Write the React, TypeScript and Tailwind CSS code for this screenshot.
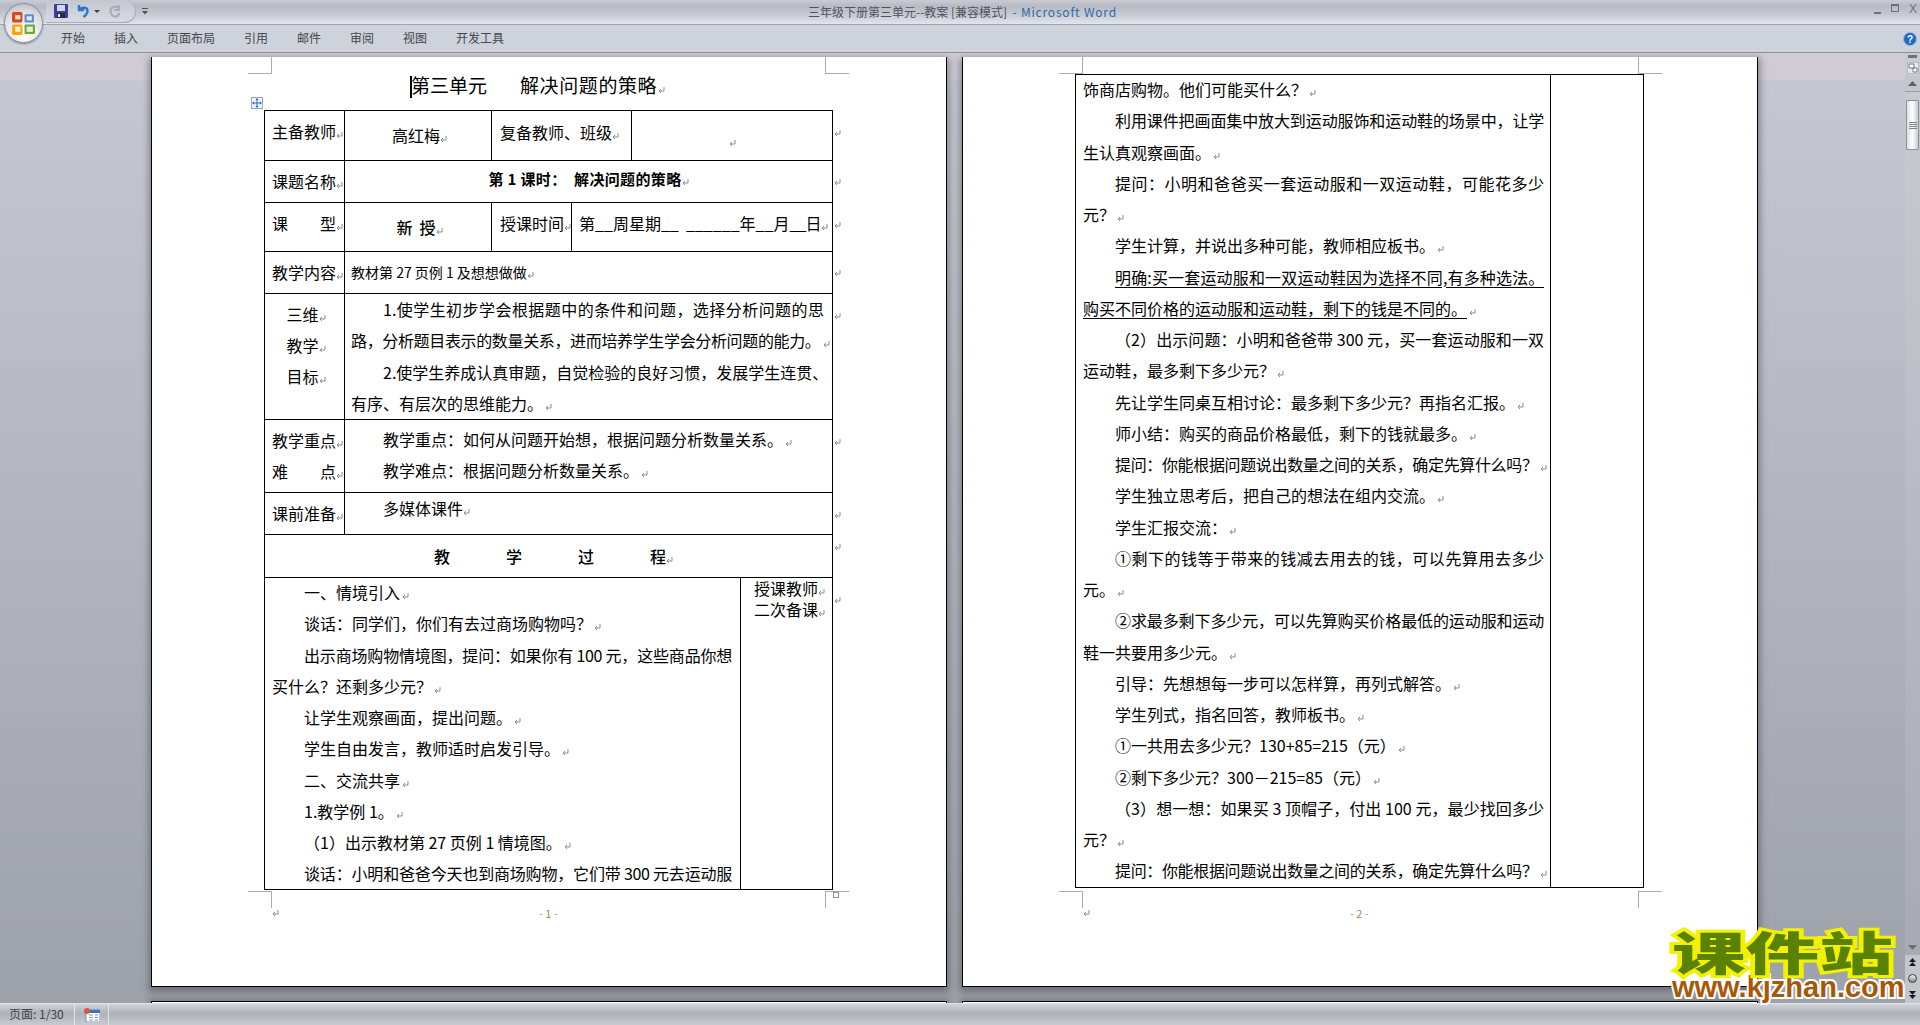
import type { ReactNode } from "react";

// little paragraph mark that Word shows at the end of each line
const Mark = ({ className = "" }: { className?: string }) => (
  <svg viewBox="0 0 7 8" className={"inline-block w-[7px] h-[8px] align-[-1px] " + className}>
    <path d="M6 1V5H1M3 3L1 5L3 7" fill="none" stroke="#8c8c8c" strokeWidth="1" />
  </svg>
);

type LineProps = {
  text: string;
  indent?: boolean;
  just?: boolean;
  under?: boolean;
  tight?: boolean;
  mark?: boolean;
};

const Line = ({ text, indent, just, under, tight, mark }: LineProps) => (
  <div
    className={
      "h-[31.25px] leading-[28px] whitespace-nowrap " +
      (indent ? "pl-[32px] " : "") +
      (just ? "[text-align-last:justify] " : "") +
      (tight ? "tracking-[-0.35px] " : "")
    }
  >
    <span className={under ? "underline underline-offset-[3px]" : ""}>{text}</span>
    {mark && <Mark className="ml-[2px]" />}
  </div>
);

const page1Lines: LineProps[] = [
  { text: "一、情境引入", indent: true, mark: true },
  { text: "谈话：同学们，你们有去过商场购物吗？", indent: true, mark: true },
  { text: "出示商场购物情境图，提问：如果你有 100 元，这些商品你想", indent: true, just: true, tight: true },
  { text: "买什么？还剩多少元？", mark: true },
  { text: "让学生观察画面，提出问题。", indent: true, mark: true },
  { text: "学生自由发言，教师适时启发引导。", indent: true, mark: true },
  { text: "二、交流共享", indent: true, mark: true },
  { text: "1.教学例 1。", indent: true, mark: true },
  { text: "（1）出示教材第 27 页例 1 情境图。", indent: true, mark: true },
  { text: "谈话：小明和爸爸今天也到商场购物，它们带 300 元去运动服", indent: true, just: true, tight: true },
];

const page2Lines: LineProps[] = [
  { text: "饰商店购物。他们可能买什么？", mark: true },
  { text: "利用课件把画面集中放大到运动服饰和运动鞋的场景中，让学", indent: true, just: true, tight: true },
  { text: "生认真观察画面。", mark: true },
  { text: "提问：小明和爸爸买一套运动服和一双运动鞋，可能花多少", indent: true, just: true },
  { text: "元？", mark: true },
  { text: "学生计算，并说出多种可能，教师相应板书。", indent: true, mark: true },
  { text: "明确:买一套运动服和一双运动鞋因为选择不同,有多种选法。", indent: true, just: true, under: true, tight: true },
  { text: "购买不同价格的运动服和运动鞋，剩下的钱是不同的。", under: true, mark: true },
  { text: "（2）出示问题：小明和爸爸带 300 元，买一套运动服和一双", indent: true, just: true },
  { text: "运动鞋，最多剩下多少元？", mark: true },
  { text: "先让学生同桌互相讨论：最多剩下多少元？再指名汇报。", indent: true, mark: true },
  { text: "师小结：购买的商品价格最低，剩下的钱就最多。", indent: true, mark: true },
  { text: "提问：你能根据问题说出数量之间的关系，确定先算什么吗？", indent: true, tight: true, mark: true },
  { text: "学生独立思考后，把自己的想法在组内交流。", indent: true, mark: true },
  { text: "学生汇报交流：", indent: true, mark: true },
  { text: "①剩下的钱等于带来的钱减去用去的钱，可以先算用去多少", indent: true, just: true },
  { text: "元。", mark: true },
  { text: "②求最多剩下多少元，可以先算购买价格最低的运动服和运动", indent: true, just: true, tight: true },
  { text: "鞋一共要用多少元。", mark: true },
  { text: "引导：先想想每一步可以怎样算，再列式解答。", indent: true, mark: true },
  { text: "学生列式，指名回答，教师板书。", indent: true, mark: true },
  { text: "①一共用去多少元？130+85=215（元）", indent: true, mark: true },
  { text: "②剩下多少元？300－215=85（元）", indent: true, mark: true },
  { text: "（3）想一想：如果买 3 顶帽子，付出 100 元，最少找回多少", indent: true, just: true },
  { text: "元？", mark: true },
  { text: "提问：你能根据问题说出数量之间的关系，确定先算什么吗？", indent: true, tight: true, mark: true },
];

const tabs = ["开始", "插入", "页面布局", "引用", "邮件", "审阅", "视图", "开发工具"];

const OfficeButton = () => (
  <div className="absolute left-[4px] top-[3px] w-[39px] h-[40px] rounded-full bg-[radial-gradient(circle_at_50%_80%,#ffffff,#dfe1e6_60%,#aeb1b8)] border border-[#8d9096] shadow-[0_1px_2px_rgba(0,0,0,0.4)] flex items-center justify-center">
    <svg viewBox="0 0 24 24" className="w-[25px] h-[25px]">
      <rect x="1" y="1" width="10" height="10" rx="1.5" fill="#d8481c" />
      <rect x="4" y="4" width="5" height="4" fill="#f6e3c8" />
      <rect x="13" y="3" width="9" height="8" rx="1" fill="#5a8fd0" />
      <rect x="15" y="5" width="5" height="4" fill="#dce8f6" />
      <rect x="1" y="13" width="10" height="10" rx="1.5" fill="#f5a511" />
      <rect x="4" y="15" width="5" height="5" fill="#fdeec8" />
      <rect x="13" y="13" width="10" height="9" rx="1" fill="#6fa832" />
      <rect x="15" y="15" width="6" height="5" fill="#e4f0d0" />
    </svg>
  </div>
);

const QuickAccess = () => (
  <div className="flex items-center h-[23px] ml-[46px] pl-[8px] w-[90px] rounded-r-[12px] border-r border-b border-[#a8abb3] bg-gradient-to-b from-[#c4c7d0] to-[#d8dbe3]">
    <svg viewBox="0 0 14 14" className="w-[14px] h-[14px]">
      <rect width="14" height="14" rx="1" fill="#3b3f9c" />
      <rect x="3" y="1" width="8" height="6" fill="#cfd6f2" />
      <rect x="3" y="9" width="8" height="5" fill="#2a2a3a" />
      <rect x="4" y="10" width="2" height="3" fill="#e8e8e8" />
    </svg>
    <svg viewBox="0 0 13 14" className="w-[13px] h-[14px] ml-[9px]">
      <path d="M2 1V6H7M2.5 5.5C5 3 10.5 3 10.5 7C10.5 9.5 9 11 6.5 13" fill="none" stroke="#2f78c8" strokeWidth="2.4" />
    </svg>
    <svg viewBox="0 0 6 3" className="w-[6px] h-[3px] ml-[4px]">
      <path d="M0 0H6L3 3Z" fill="#444" />
    </svg>
    <svg viewBox="0 0 13 14" className="w-[13px] h-[14px] ml-[8px]">
      <path d="M11 1V6H6M10 3.5C7 1.5 2.5 3 2.5 7C2.5 10.5 5 13 8 12.5C10 12 11 10.5 11 9" fill="none" stroke="#a9acb2" strokeWidth="2.2" />
    </svg>
  </div>
);

const TitleBar = () => (
  <div className="flex h-[25px] border-b border-[#a2a5ac] bg-[linear-gradient(to_bottom,#c9ccd4_0,#b8bbc4_25%,#c6c9d2_60%,#e2e5ed_100%)]">
    <QuickAccess />
    <svg viewBox="0 0 6 7" className="w-[6px] h-[7px] ml-[6px] mt-[8px]">
      <path d="M0 0H6V1H0ZM0 3H6L3 6.5Z" fill="#555" />
    </svg>
    <div className="ml-[660px] text-[12px] leading-[24px] text-[#4f535c] whitespace-pre">
      三年级下册第三单元--教案 [兼容模式]  <span className="text-[#2f6aa8] tracking-[0.8px]">- Microsoft Word</span>
    </div>
    <div className="ml-auto flex items-start gap-[10px] pr-[3px] pt-[3px] text-[#6d7077]">
      <span className="mt-[9px] w-[7px] h-[2px] bg-[#6d7077]" />
      <span className="mt-[1px] w-[8px] h-[8px] border border-t-2 border-[#6d7077]" />
      <span className="text-[12px] leading-[13px] font-['Liberation_Sans',sans-serif]">X</span>
    </div>
  </div>
);

const Ribbon = () => (
  <div className="flex items-center h-[28px] border-b border-[#8e9197] bg-[#cdd2db] text-[12px] text-[#44474d] pl-[61px] gap-[29px]">
    {tabs.map((t) => (
      <span key={t} className="leading-[24px] pb-[1px]">{t}</span>
    ))}
    <svg viewBox="0 0 14 14" className="w-[14px] h-[14px] ml-auto mr-[3px]">
      <circle cx="7" cy="7" r="6.5" fill="#2368c4" stroke="#8fb6e6" />
      <text x="7" y="10.5" textAnchor="middle" fontSize="10" fontWeight="700" fill="#fff" fontFamily="Liberation Sans">?</text>
    </svg>
  </div>
);

const CropMarks = ({ rightClass }: { rightClass: string }) => (
  <>
    <div className="absolute left-[96px] top-0 w-[24px] h-[17px] border-r border-b border-[#a9acb4]" />
    <div className={"absolute top-0 w-[24px] h-[17px] border-l border-b border-[#a9acb4] " + rightClass} />
    <div className="absolute left-[96px] top-[834px] w-[24px] h-[17px] border-r border-t border-[#a9acb4]" />
    <div className={"absolute top-[834px] w-[24px] h-[17px] border-l border-t border-[#a9acb4] " + rightClass} />
  </>
);

const Row = ({ h, markClass, children }: { h: string; markClass: string; children: ReactNode }) => (
  <div className="flex">
    <div className={"flex w-[569px] border-x border-b border-black " + h}>{children}</div>
    <Mark className={"ml-[1px] " + markClass} />
  </div>
);

const Spread = ({ a, b }: { a: string; b: string }) => (
  <span className="inline-flex justify-between w-[64px]">
    <span>{a}</span>
    <span>{b}</span>
  </span>
);

const PageNo = ({ n, gap }: { n: string; gap: string }) => (
  <div className={"flex items-center h-[14px] ml-[120px] " + gap}>
    <Mark />
    <span className="ml-[260px] text-[11px] leading-[14px] text-[#a0a0a0]">
      - <span className="text-[#c07a50]">{n}</span> -
    </span>
  </div>
);

const FirstPage = () => (
  <div className="relative w-[796px] h-[930px] shrink-0 bg-white border-x border-b border-black shadow-[0_3px_7px_2px_rgba(60,62,70,0.5)]">
    <CropMarks rightClass="left-[673px]" />
    <div className="h-[53px] pl-[258px] pt-[16px] text-[19px] leading-[24px] whitespace-nowrap">
      <span className="inline-block w-[2px] h-[22px] bg-black align-[-5px] -mr-[1px]" />
      第三单元<span className="ml-[33px] tracking-[0.6px]">解决问题的策略</span>
      <Mark className="ml-[1px]" />
    </div>
    <div className="relative ml-[112px] text-[16px] text-black">
      <button className="absolute -left-[13px] -top-[13px] w-[12px] h-[12px] border border-[#9aa6bd] bg-[#eef2fa] flex items-center justify-center">
        <svg viewBox="0 0 10 10" className="w-[10px] h-[10px]">
          <path d="M4.5 2H5.5V4.5H8V3.5L10 5L8 6.5V5.5H5.5V8H6.5L5 10L3.5 8H4.5V5.5H2V6.5L0 5L2 3.5V4.5H4.5V2H3.5L5 0L6.5 2H5.5" fill="#2f66c4" />
        </svg>
      </button>
      <div className="w-[569px] h-px bg-black" />
      <Row h="h-[50px]" markClass="mt-[18px]">
        <div className="w-[80px] border-r border-black pl-[7px] pt-[10px] leading-[20px] whitespace-nowrap">主备教师<Mark /></div>
        <div className="w-[147px] border-r border-black pl-[3px] pt-[14px] leading-[20px] text-center">高红梅<Mark /></div>
        <div className="w-[140px] border-r border-black pl-[8px] pt-[11px] leading-[20px] whitespace-nowrap">复备教师、班级<Mark /></div>
        <div className="flex-1 pt-[18px] leading-[20px] text-center"><Mark /></div>
      </Row>
      <Row h="h-[42px]" markClass="mt-[17px]">
        <div className="w-[80px] border-r border-black pl-[7px] pt-[10px] leading-[20px] whitespace-nowrap">课题名称<Mark /></div>
        <div className="flex-1 pt-[8px] leading-[20px] text-center text-[15px] font-bold whitespace-pre tracking-[0.35px]">第 1 课时：  解决问题的策略<Mark /></div>
      </Row>
      <Row h="h-[49px]" markClass="mt-[18px]">
        <div className="w-[80px] border-r border-black pl-[7px] pt-[10px] leading-[20px] whitespace-nowrap"><Spread a="课" b="型" /><Mark /></div>
        <div className="w-[147px] border-r border-black pl-[3px] pt-[14px] leading-[20px] text-center font-medium whitespace-pre">新  授<Mark /></div>
        <div className="w-[80px] border-r border-black pl-[8px] pt-[10px] leading-[20px] whitespace-nowrap">授课时间<Mark /></div>
        <div className="flex-1 pl-[7px] pt-[10px] leading-[20px] whitespace-pre">第__周星期__  ______年__月<span className="tracking-[-1px]">__</span>日<Mark /></div>
      </Row>
      <Row h="h-[42px]" markClass="mt-[17px]">
        <div className="w-[80px] border-r border-black pl-[7px] pt-[10px] leading-[20px] whitespace-nowrap">教学内容<Mark /></div>
        <div className="flex-1 pl-[6px] pt-[10px] leading-[20px] text-[14px]">教材第 27 页例 1 及想想做做<Mark /></div>
      </Row>
      <Row h="h-[126px]" markClass="mt-[18px]">
        <div className="w-[80px] border-r border-black pl-[3px] pt-[5px] leading-[31px] text-center">
          <div>三维<Mark /></div>
          <div>教学<Mark /></div>
          <div>目标<Mark /></div>
        </div>
        <div className="flex-1 min-w-0 pl-[6px] pr-[8px] pt-[1px]">
          <Line text="1.使学生初步学会根据题中的条件和问题，选择分析问题的思" indent just />
          <Line text="路，分析题目表示的数量关系，进而培养学生学会分析问题的能力。" tight mark />
          <Line text="2.使学生养成认真审题，自觉检验的良好习惯，发展学生连贯、" indent just />
          <Line text="有序、有层次的思维能力。" mark />
        </div>
      </Row>
      <Row h="h-[73px]" markClass="mt-[18px]">
        <div className="w-[80px] border-r border-black pl-[7px] pt-[5px] leading-[31px] whitespace-nowrap">
          <div>教学重点<Mark /></div>
          <div><Spread a="难" b="点" /><Mark /></div>
        </div>
        <div className="flex-1 pl-[6px] pt-[5px]">
          <Line text="教学重点：如何从问题开始想，根据问题分析数量关系。" indent mark />
          <Line text="教学难点：根据问题分析数量关系。" indent mark />
        </div>
      </Row>
      <Row h="h-[42px]" markClass="mt-[18px]">
        <div className="w-[80px] border-r border-black pl-[7px] pt-[10px] leading-[20px] whitespace-nowrap">课前准备<Mark /></div>
        <div className="flex-1 pl-[38px] pt-[5px] leading-[20px]">多媒体课件<Mark /></div>
      </Row>
      <Row h="h-[43px]" markClass="mt-[8px]">
        <div className="flex-1 flex pl-[169px] gap-[56px] pt-[11px] leading-[20px] font-medium">
          <span>教</span>
          <span>学</span>
          <span>过</span>
          <span className="whitespace-nowrap">程<Mark /></span>
        </div>
      </Row>
      <Row h="h-[312px]" markClass="mt-[18px]">
        <div className="w-[476px] border-r border-black pl-[7px] pr-[8px]">
          {page1Lines.map((l) => (
            <Line key={l.text} {...l} />
          ))}
        </div>
        <div className="flex-1 pl-[13px] leading-[21px] whitespace-nowrap">
          <div>授课教师<Mark /></div>
          <div>二次备课<Mark /></div>
        </div>
      </Row>
      <div className="absolute left-[569px] top-[782px] w-[6px] h-[6px] border border-[#8e9197]" />
    </div>
    <PageNo n="1" gap="mt-[16px]" />
  </div>
);

const SecondPage = () => (
  <div className="relative w-[796px] h-[930px] shrink-0 bg-white border-x border-b border-black shadow-[0_3px_7px_2px_rgba(60,62,70,0.5)]">
    <CropMarks rightClass="left-[675px]" />
    <div className="ml-[112px] mt-[17px] w-[569px] h-[814px] flex border border-black text-[16px] text-black">
      <div className="w-[475px] border-r border-black pl-[7px] pr-[6px]">
        {page2Lines.map((l, i) => (
          <Line key={i} {...l} />
        ))}
      </div>
      <div className="flex-1" />
    </div>
    <PageNo n="2" gap="mt-[18px]" />
  </div>
);

const NextPageEdge = () => (
  <div className="w-[796px] h-[20px] shrink-0 bg-white border-x border-t border-black shadow-[0_0_6px_2px_rgba(60,62,70,0.4)]" />
);

const ScrollBar = () => (
  <div className="relative z-10 flex flex-col items-center w-[15px] h-full ml-auto bg-gradient-to-b from-[#c9ccd3] to-[#a6a9b2]">
    <div className="mt-[2px] w-[9px] h-[3px] bg-[#6f7278]" />
    <svg viewBox="0 0 12 12" className="w-[12px] h-[12px] mt-[4px]">
      <rect width="12" height="12" fill="#e8eaee" stroke="#8e9197" />
      <path d="M2 2H7V6H2ZM6 6H10V10H6Z" fill="#fff" stroke="#55585e" strokeWidth="0.8" />
    </svg>
    <div className="w-full h-[16px] mt-[2px] flex items-center justify-center bg-[#c3c6ce] border-b border-[#9a9da4]">
      <svg viewBox="0 0 9 5" className="w-[9px] h-[5px]"><path d="M4.5 0L9 5H0Z" fill="#5e6168" /></svg>
    </div>
    <div className="w-[13px] h-[50px] mt-[8px] flex flex-col items-center justify-center gap-[1px] rounded-[1px] border border-[#8c8f96] bg-gradient-to-r from-[#dfe1e6] via-[#ffffff] to-[#c9cbd1]">
      <span className="w-[8px] h-px bg-[#7d8087]" />
      <span className="w-[8px] h-px bg-[#7d8087]" />
      <span className="w-[8px] h-px bg-[#7d8087]" />
      <span className="w-[8px] h-px bg-[#7d8087]" />
    </div>
    <div className="flex-1" />
    <svg viewBox="0 0 9 5" className="w-[9px] h-[5px] mb-[5px]"><path d="M0 0H9L4.5 5Z" fill="#6a6d74" /></svg>
    <div className="w-full h-[48px] flex flex-col items-center justify-around bg-[#c4c6ce] pb-[1px]">
      <svg viewBox="0 0 9 9" className="w-[9px] h-[9px]"><path d="M4.5 0L8 4H1ZM4.5 4L8 8H1Z" fill="#1c1c1c" /></svg>
      <span className="w-[9px] h-[9px] rounded-full border border-[#3c3c3c] bg-gradient-to-b from-[#f4f4f4] to-[#8a8a8a]" />
      <svg viewBox="0 0 9 9" className="w-[9px] h-[9px]"><path d="M4.5 9L8 5H1ZM4.5 5L8 1H1Z" fill="#1c1c1c" /></svg>
    </div>
  </div>
);

const StatusBar = () => (
  <div className="flex h-[22px] shrink-0 border-t border-[#e0e2e7] bg-[linear-gradient(to_bottom,#d2d4da_0,#aeb1b9_45%,#c9cbd1_100%)] text-[12px] text-[#3f4248]">
    <div className="w-[75px] pl-[9px] leading-[19px] border-r border-[#e4e5e9] whitespace-nowrap">页面: 1/30</div>
    <div className="w-[34px] flex items-center justify-center border-r border-[#e4e5e9]">
      <svg viewBox="0 0 16 14" className="w-[16px] h-[14px]">
        <rect x="2" y="2" width="14" height="12" fill="#fff" stroke="#5f7fb0" strokeWidth="0.8" />
        <rect x="2" y="2" width="14" height="3" fill="#3f6fc0" />
        <path d="M5 7H9M11 7H14M5 9.5H9M11 9.5H14M5 12H9M11 12H14" stroke="#7f97bd" />
        <circle cx="3" cy="3" r="3" fill="#d9573a" />
      </svg>
    </div>
  </div>
);

// 课件站 watermark sits over the bottom right corner of the window
const Watermark = () => (
  <div className="absolute left-[1672px] top-[927px] w-[230px] pointer-events-none">
    <div className="origin-left scale-x-[1.6] text-[46px] leading-[46px] font-black text-[#5a8200] whitespace-nowrap [paint-order:stroke_fill] [-webkit-text-stroke:6px_#f2f200]">
      课件站
    </div>
    <div className="text-[29px] leading-[28px] font-bold text-[#a65808] whitespace-nowrap font-['Liberation_Sans',sans-serif] [paint-order:stroke_fill] [-webkit-text-stroke:4px_#ffffff]">
      www.kjzhan.com
    </div>
  </div>
);

export default function App() {
  return (
    <div className="relative flex flex-col w-[1920px] h-[1025px] overflow-hidden bg-[#c5c8d0] font-['Noto_Sans_CJK_SC',sans-serif]">
      <TitleBar />
      <OfficeButton />
      <Ribbon />
      <div className="flex flex-1 min-h-0 overflow-hidden bg-[linear-gradient(to_bottom,#cfccd6_0,#cfccd6_27px,#c5c8d0_27px,#9da1a9_100%)]">
        <div className="flex flex-col gap-[14px] pl-[151px] pt-[4px]">
          <div className="flex gap-[15px]">
            <FirstPage />
            <SecondPage />
          </div>
          <div className="flex gap-[15px]">
            <NextPageEdge />
            <NextPageEdge />
          </div>
        </div>
        <ScrollBar />
      </div>
      <StatusBar />
      <Watermark />
    </div>
  );
}
